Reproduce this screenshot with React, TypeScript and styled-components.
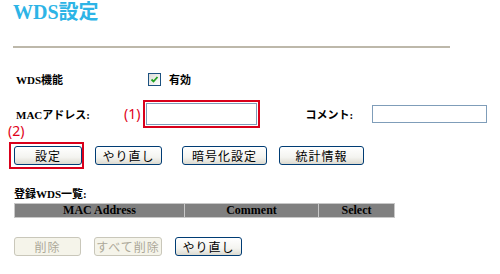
import * as React from "react";
import styled, { createGlobalStyle } from "styled-components";

const GlobalStyle = createGlobalStyle`
  html, body {
    margin: 0;
    padding: 0;
    background: #fff;
  }
  body {
    font-family: "Liberation Serif", "Noto Sans CJK JP", serif;
  }
`;

const PageStyled = styled.div`
  width: 500px;
  height: 274px;
  position: relative;
  overflow: hidden;
`;

const Title = styled.h1`
  margin: 0;
  padding: 2px 0 0 13px;
  height: 20px;
  font-size: 20px;
  line-height: 20px;
  font-weight: bold;
  color: #2db4e6;
  font-family: "Liberation Serif", "Noto Sans CJK JP", serif;
`;

const Rule = styled.div`
  margin: 24px 0 0 13px;
  width: 437px;
  height: 2px;
  background: #bdb8aa;
`;

const Row = styled.div<{ $top: number; $height: number }>`
  display: flex;
  align-items: center;
  margin-top: ${(p) => p.$top}px;
  height: ${(p) => p.$height}px;
  padding-left: 16px;
`;

const Label = styled.span<{ $width?: number }>`
  width: ${(p) => (p.$width ? `${p.$width}px` : "auto")};
  flex-shrink: 0;
  font-size: 11px;
  font-weight: bold;
  color: #000;
  font-family: "Liberation Serif", "Noto Sans CJK JP", serif;
`;

const Check = styled.span`
  width: 11px;
  height: 11px;
  border: 1px solid #1c5180;
  background: linear-gradient(135deg, #dcdcd7, #fff);
  display: flex;
  align-items: center;
  justify-content: center;
  margin-right: 8px;
`;

const Note = styled.span`
  color: #e00018;
  font-size: 14px;
  font-family: "Noto Sans", "Noto Sans CJK JP", sans-serif;
  line-height: 14px;
`;

const RedFrame = styled.div`
  border: 2px solid #d9001b;
  padding: 1px;
  display: flex;
`;

const TextInput = styled.input<{ $width: number }>`
  width: ${(p) => p.$width}px;
  height: 18px;
  box-sizing: border-box;
  border: 1px solid #7f9db9;
  padding: 0 2px;
  margin: 0;
  background: #fff;
  outline: none;
`;

const ButtonRow = styled.div<{ $top: number }>`
  position: relative;
  display: flex;
  align-items: center;
  margin-top: ${(p) => p.$top}px;
  padding-left: 14px;
`;

const Mark = styled(Note)`
  position: absolute;
  left: 8px;
  top: -18px;
`;

const Button = styled.button<{ $width: number; $gap?: number; $disabled?: boolean }>`
  width: ${(p) => p.$width}px;
  height: 19px;
  margin: 0 ${(p) => p.$gap ?? 0}px 0 0;
  padding: 0;
  box-sizing: border-box;
  border: 1px solid ${(p) => (p.$disabled ? "#c9c7ba" : "#003c74")};
  border-radius: 3px;
  background: ${(p) =>
    p.$disabled
      ? "#f5f4ea"
      : "linear-gradient(#ffffff, #f4f4f0 60%, #dcdad0)"};
  color: ${(p) => (p.$disabled ? "#aca899" : "#000")};
  font-size: 12px;
  font-family: "Noto Sans CJK JP", sans-serif;
  line-height: 16px;
  letter-spacing: 1px;
`;

const FramedButtons = styled.div`
  border: 2px solid #d9001b;
  padding: 2px 0 2px 3px;
  margin-left: -5px;
  margin-right: 11px;
  display: flex;
`;

const ListTitle = styled.div`
  margin: 19px 0 0 14px;
  font-size: 11px;
  font-weight: bold;
  line-height: 13px;
  font-family: "Liberation Serif", "Noto Sans CJK JP", serif;
`;

const Table = styled.div`
  margin: 2px 0 0 14px;
  width: 381px;
  display: grid;
  grid-template-columns: 171px 134px 76px;
`;

const HeadCell = styled.div`
  height: 15px;
  box-sizing: border-box;
  background: #808080;
  border: 1px solid #c8c8c8;
  border-width: 1px 1px 1px 0;
  font-size: 12px;
  font-weight: bold;
  line-height: 13px;
  text-align: center;
  font-family: "Liberation Serif", serif;
  color: #000;
  &:first-child {
    border-left-width: 1px;
  }
`;

export default function App() {
  return (
    <PageStyled>
      <GlobalStyle />
      <Title>WDS設定</Title>
      <Rule />
      <Row $top={24} $height={14}>
        <Label $width={132}>WDS機能</Label>
        <Check>
          <svg width="9" height="9" viewBox="0 0 9 9">
            <path d="M1.5 4.5 L3.5 6.5 L7.5 2" stroke="#21a121" strokeWidth="1.8" fill="none" />
          </svg>
        </Check>
        <Label>有効</Label>
      </Row>
      <Row $top={14} $height={28}>
        <Label $width={108}>MACアドレス:</Label>
        <Note style={{ marginRight: 3 }}>(1)</Note>
        <RedFrame>
          <TextInput $width={111} style={{ height: 22 }} />
        </RedFrame>
        <Label style={{ marginLeft: 45, width: 67 }}>コメント:</Label>
        <TextInput $width={115} />
      </Row>
      <ButtonRow $top={14}>
        <Mark>(2)</Mark>
        <FramedButtons>
          <Button $width={68}>設定</Button>
        </FramedButtons>
        <Button $width={67} $gap={20}>やり直し</Button>
        <Button $width={85} $gap={12}>暗号化設定</Button>
        <Button $width={85}>統計情報</Button>
      </ButtonRow>
      <ListTitle>登録WDS一覧:</ListTitle>
      <Table>
        <HeadCell>MAC Address</HeadCell>
        <HeadCell>Comment</HeadCell>
        <HeadCell>Select</HeadCell>
      </Table>
      <ButtonRow $top={19}>
        <Button $width={67} $gap={13} $disabled>削除</Button>
        <Button $width={68} $gap={13} $disabled>すべて削除</Button>
        <Button $width={67}>やり直し</Button>
      </ButtonRow>
    </PageStyled>
  );
}
